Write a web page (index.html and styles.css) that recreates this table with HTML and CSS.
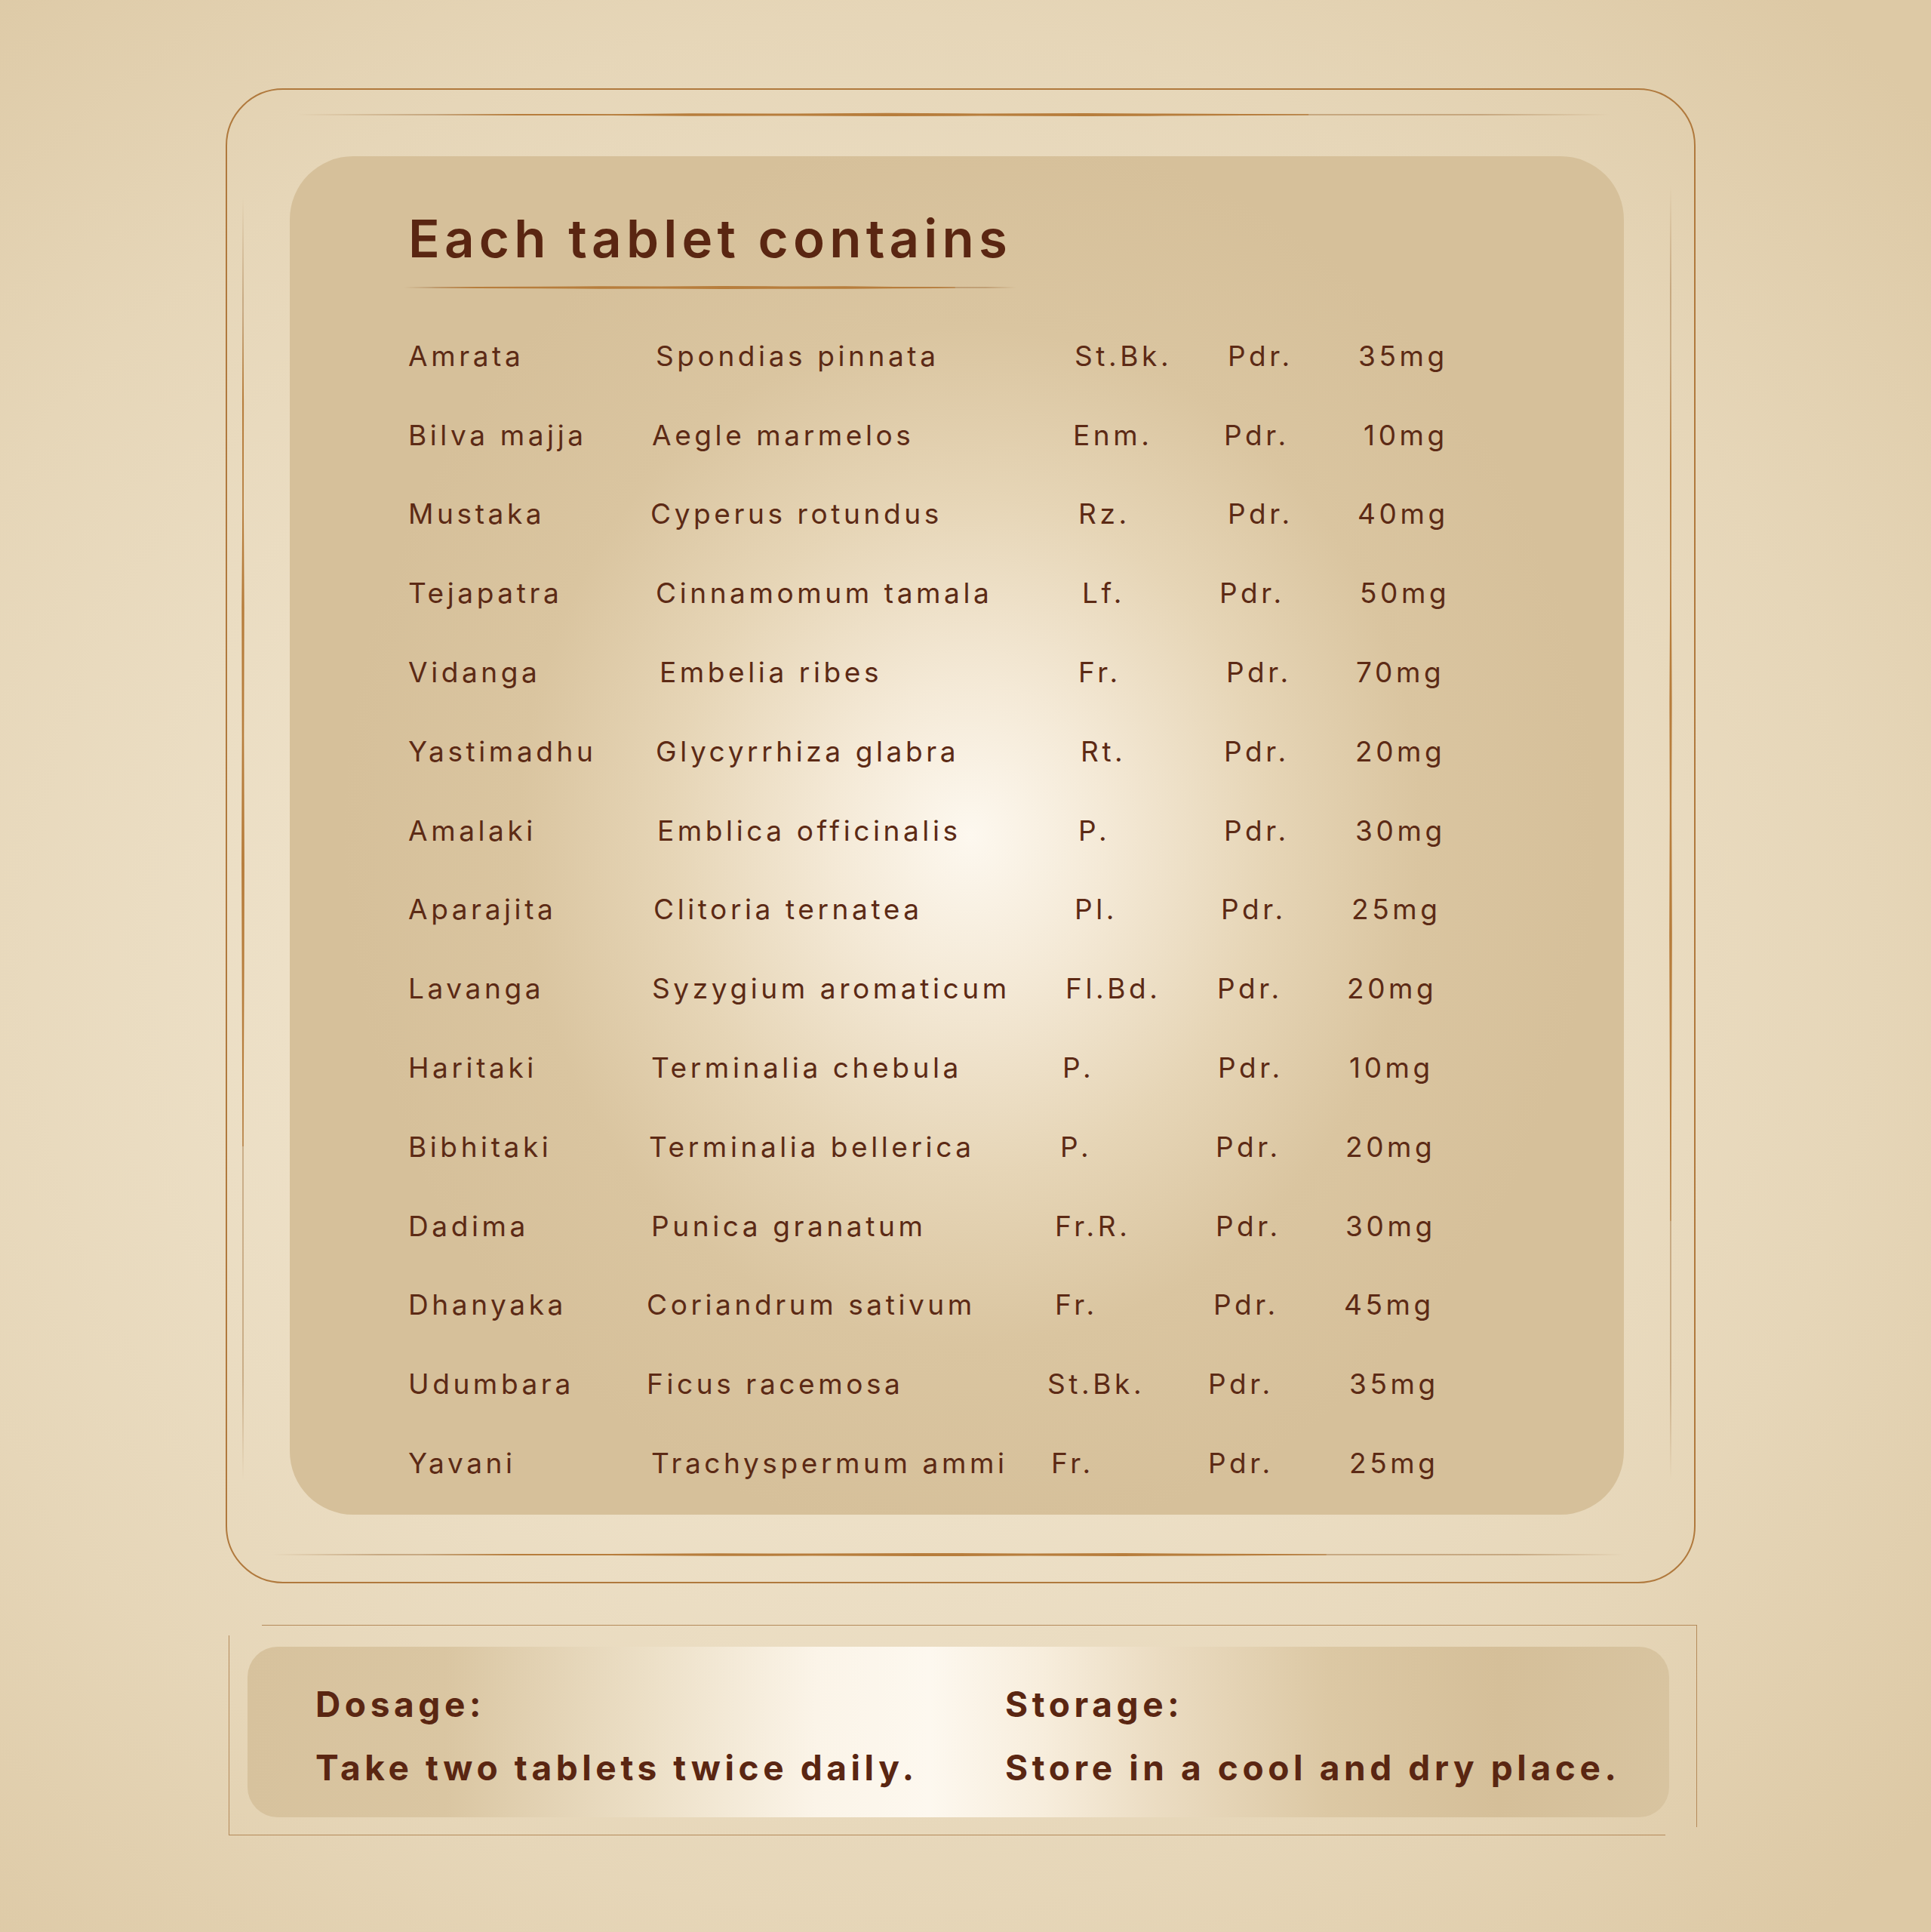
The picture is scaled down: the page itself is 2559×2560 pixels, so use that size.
FILE: index.html
```html
<!DOCTYPE html>
<html lang="en">
<head>
<meta charset="utf-8">
<title>Each tablet contains</title>
<link rel="stylesheet" href="styles.css">
</head>
<body>
<main class="page">
  <section class="frame">
    <svg class="brush brush-top" viewBox="0 0 1000 12" preserveAspectRatio="none" aria-hidden="true">
      <defs>
        <linearGradient id="fadeTop" x1="0" x2="1" y1="0" y2="0">
          <stop offset="0" stop-color="#b0885a" stop-opacity="0"/>
          <stop offset="0.1" stop-color="#b0885a" stop-opacity="0.85"/>
          <stop offset="0.9" stop-color="#b0885a" stop-opacity="0.85"/>
          <stop offset="1" stop-color="#b0885a" stop-opacity="0"/>
        </linearGradient>
      </defs>
      <rect x="0" y="5.3" width="1000" height="1.4" fill="url(#fadeTop)"/>
      <path d="M105 6 L170 5 L240 5.2 L300 4.2 L380 4.6 L450 3.8 L520 4.4 L600 3.9 L660 4.6 L720 5 L770 5.3 L770 6.6 L720 7 L660 7.6 L600 8 L520 7.6 L450 8.1 L380 7.4 L300 7.8 L240 7.1 L170 7 Z" fill="#b77d3c"/>
    </svg>
    <svg class="brush brush-left" viewBox="0 0 12 1000" preserveAspectRatio="none" aria-hidden="true">
      <defs>
        <linearGradient id="fadeLeft" x1="0" x2="0" y1="0" y2="1">
          <stop offset="0" stop-color="#b0885a" stop-opacity="0"/>
          <stop offset="0.08" stop-color="#b0885a" stop-opacity="0.8"/>
          <stop offset="0.92" stop-color="#b0885a" stop-opacity="0.8"/>
          <stop offset="1" stop-color="#b0885a" stop-opacity="0"/>
        </linearGradient>
      </defs>
      <rect x="5.3" y="0" width="1.4" height="1000" fill="url(#fadeLeft)"/>
      <path d="M6 90 L5 160 L5.3 240 L4.3 320 L4.7 420 L4.1 520 L4.6 600 L5 680 L5.4 740 L6.6 740 L7 680 L7.6 600 L7.9 520 L7.3 420 L7.7 320 L6.9 240 L7.1 160 Z" fill="#b77d3c"/>
    </svg>
    <svg class="brush brush-right" viewBox="0 0 12 1000" preserveAspectRatio="none" aria-hidden="true">
      <defs>
        <linearGradient id="fadeRight" x1="0" x2="0" y1="0" y2="1">
          <stop offset="0" stop-color="#b0885a" stop-opacity="0"/>
          <stop offset="0.08" stop-color="#b0885a" stop-opacity="0.8"/>
          <stop offset="0.92" stop-color="#b0885a" stop-opacity="0.8"/>
          <stop offset="1" stop-color="#b0885a" stop-opacity="0"/>
        </linearGradient>
      </defs>
      <rect x="5.3" y="0" width="1.4" height="1000" fill="url(#fadeRight)"/>
      <path d="M6 130 L5.1 220 L5.3 300 L4.4 400 L4.8 480 L4.2 580 L4.7 660 L5.1 740 L5.5 800 L6.5 800 L6.9 740 L7.4 660 L7.8 580 L7.2 480 L7.6 400 L6.8 300 L7 220 Z" fill="#b77d3c"/>
    </svg>
    <svg class="brush brush-bottom" viewBox="0 0 1000 12" preserveAspectRatio="none" aria-hidden="true">
      <defs>
        <linearGradient id="fadeBottom" x1="0" x2="1" y1="0" y2="0">
          <stop offset="0" stop-color="#b0885a" stop-opacity="0"/>
          <stop offset="0.08" stop-color="#b0885a" stop-opacity="0.85"/>
          <stop offset="0.92" stop-color="#b0885a" stop-opacity="0.85"/>
          <stop offset="1" stop-color="#b0885a" stop-opacity="0"/>
        </linearGradient>
      </defs>
      <rect x="0" y="5.3" width="1000" height="1.4" fill="url(#fadeBottom)"/>
      <path d="M110 6 L180 5.1 L250 4.9 L330 4.2 L400 4.6 L480 3.9 L560 4.4 L630 4 L690 4.7 L740 5.1 L780 5.4 L780 6.6 L740 7 L690 7.4 L630 8 L560 7.6 L480 8.1 L400 7.5 L330 7.8 L250 7.1 L180 6.9 Z" fill="#b77d3c"/>
    </svg>

    <div class="panel">
      <h1 class="title">Each tablet contains</h1>
      <svg class="underline" viewBox="0 0 1000 12" preserveAspectRatio="none" aria-hidden="true">
        <defs>
          <linearGradient id="fadeUnder" x1="0" x2="1" y1="0" y2="0">
            <stop offset="0" stop-color="#b0885a" stop-opacity="0"/>
            <stop offset="0.05" stop-color="#b0885a" stop-opacity="0.85"/>
            <stop offset="0.95" stop-color="#b0885a" stop-opacity="0.85"/>
            <stop offset="1" stop-color="#b0885a" stop-opacity="0"/>
          </linearGradient>
        </defs>
        <rect x="0" y="5.3" width="1000" height="1.4" fill="url(#fadeUnder)"/>
        <path d="M45 6 L120 5 L220 4.8 L320 4.2 L420 4.6 L520 3.9 L620 4.4 L720 4.3 L800 4.9 L870 5.3 L900 5.6 L900 6.5 L870 6.9 L800 7.3 L720 7.8 L620 7.7 L520 8.1 L420 7.5 L320 7.8 L220 7.2 L120 7 Z" fill="#b77d3c"/>
      </svg>
      <div class="rows">
        <div class="row"><span>Amrata</span><span>Spondias pinnata</span><span>St.Bk.</span><span>Pdr.</span><span>35mg</span></div>
        <div class="row"><span>Bilva majja</span><span>Aegle marmelos</span><span>Enm.</span><span>Pdr.</span><span>10mg</span></div>
        <div class="row"><span>Mustaka</span><span>Cyperus rotundus</span><span>Rz.</span><span>Pdr.</span><span>40mg</span></div>
        <div class="row"><span>Tejapatra</span><span>Cinnamomum tamala</span><span>Lf.</span><span>Pdr.</span><span>50mg</span></div>
        <div class="row"><span>Vidanga</span><span>Embelia ribes</span><span>Fr.</span><span>Pdr.</span><span>70mg</span></div>
        <div class="row"><span>Yastimadhu</span><span>Glycyrrhiza glabra</span><span>Rt.</span><span>Pdr.</span><span>20mg</span></div>
        <div class="row"><span>Amalaki</span><span>Emblica officinalis</span><span>P.</span><span>Pdr.</span><span>30mg</span></div>
        <div class="row"><span>Aparajita</span><span>Clitoria ternatea</span><span>Pl.</span><span>Pdr.</span><span>25mg</span></div>
        <div class="row"><span>Lavanga</span><span>Syzygium aromaticum</span><span>Fl.Bd.</span><span>Pdr.</span><span>20mg</span></div>
        <div class="row"><span>Haritaki</span><span>Terminalia chebula</span><span>P.</span><span>Pdr.</span><span>10mg</span></div>
        <div class="row"><span>Bibhitaki</span><span>Terminalia bellerica</span><span>P.</span><span>Pdr.</span><span>20mg</span></div>
        <div class="row"><span>Dadima</span><span>Punica granatum</span><span>Fr.R.</span><span>Pdr.</span><span>30mg</span></div>
        <div class="row"><span>Dhanyaka</span><span>Coriandrum sativum</span><span>Fr.</span><span>Pdr.</span><span>45mg</span></div>
        <div class="row"><span>Udumbara</span><span>Ficus racemosa</span><span>St.Bk.</span><span>Pdr.</span><span>35mg</span></div>
        <div class="row"><span>Yavani</span><span>Trachyspermum ammi</span><span>Fr.</span><span>Pdr.</span><span>25mg</span></div>
      </div>
    </div>
  </section>

  <section class="info">
    <div class="info-panel">
      <div class="info-col">
        <h2 class="info-label">Dosage:</h2>
        <p class="info-text">Take two tablets twice daily.</p>
      </div>
      <div class="info-col">
        <h2 class="info-label">Storage:</h2>
        <p class="info-text">Store in a cool and dry place.</p>
      </div>
    </div>
  </section>
</main>
</body>
</html>
```

FILE: styles.css
```css
html, body {
  margin: 0;
  padding: 0;
}

body {
  min-height: 2560px;
  background: radial-gradient(ellipse 72% 68% at 45% 50%, #f4e9d6 0%, #ede0c7 42%, #e6d6b8 72%, #ddc9a5 100%);
  font-family: Inter, Lato, "Liberation Sans", sans-serif;
  color: #5c2a15;
}

.page {
  padding: 117px 0 0 299px;
}

/* ---------- main frame ---------- */
.frame {
  position: relative;
  box-sizing: border-box;
  width: 1948px;
  height: 1981px;
  border: 2px solid #b0793d;
  border-radius: 76px;
  padding: 88px 0 0 83px;
}

.brush {
  position: absolute;
  display: block;
}

.brush-top {
  left: 91px;
  top: 27px;
  width: 1743px;
  height: 12px;
}

.brush-bottom {
  left: 59px;
  top: 1935px;
  width: 1792px;
  height: 12px;
}

.brush-left {
  left: 15px;
  top: 142px;
  width: 12px;
  height: 1700px;
}

.brush-right {
  left: 1907px;
  top: 126px;
  width: 12px;
  height: 1716px;
}

.panel {
  box-sizing: border-box;
  width: 1768px;
  height: 1800px;
  border-radius: 84px;
  padding: 74px 0 0 157px;
  background: radial-gradient(ellipse 47% 52% at 51% 50%, #fdf8ef 0%, #f4e9d6 22%, #e6d5b6 48%, #dac5a0 72%, #d6c09a 100%);
}

.title {
  margin: 0;
  font-size: 69px;
  line-height: 70px;
  font-weight: 600;
  letter-spacing: 6.2px;
  color: #5a2612;
}

.underline {
  display: block;
  margin: 24px 0 0 -6px;
  width: 812px;
  height: 12px;
}

.rows {
  margin-top: 32px;
}

.row {
  display: grid;
  height: 104.8px;
  align-items: center;
  font-size: 37px;
  font-weight: 400;
  letter-spacing: 4.6px;
  color: #5c2a15;
  white-space: nowrap;
}

.row span {
  line-height: normal;
}

.row:nth-child(1)  { grid-template-columns: 328px 555px 203px 173px auto; }
.row:nth-child(2)  { grid-template-columns: 323px 558px 200px 185px auto; }
.row:nth-child(3)  { grid-template-columns: 321px 567px 198px 172px auto; }
.row:nth-child(4)  { grid-template-columns: 328px 565px 182px 186px auto; }
.row:nth-child(5)  { grid-template-columns: 333px 555px 196px 172px auto; }
.row:nth-child(6)  { grid-template-columns: 328px 563px 190px 174px auto; }
.row:nth-child(7)  { grid-template-columns: 330px 558px 193px 174px auto; }
.row:nth-child(8)  { grid-template-columns: 325px 558px 194px 173px auto; }
.row:nth-child(9)  { grid-template-columns: 323px 548px 201px 172px auto; }
.row:nth-child(10) { grid-template-columns: 322px 545px 206px 174px auto; }
.row:nth-child(11) { grid-template-columns: 319px 545px 206px 172px auto; }
.row:nth-child(12) { grid-template-columns: 322px 535px 213px 172px auto; }
.row:nth-child(13) { grid-template-columns: 316px 541px 210px 173px auto; }
.row:nth-child(14) { grid-template-columns: 316px 531px 213px 187px auto; }
.row:nth-child(15) { grid-template-columns: 322px 530px 208px 187px auto; }

/* ---------- dosage / storage ---------- */
.info {
  position: relative;
  box-sizing: border-box;
  width: 1946px;
  height: 279px;
  margin: 55px 0 0 4px;
  padding: 29px 0 0 25px;
}

.info::before {
  content: "";
  position: absolute;
  left: 44px;
  top: 0;
  right: 0;
  height: 267px;
  border-top: 1.5px solid #b48a5a;
  border-right: 1.5px solid #b48a5a;
}

.info::after {
  content: "";
  position: absolute;
  left: 0;
  top: 14px;
  width: 1903px;
  bottom: 0;
  border-left: 1.5px solid #b48a5a;
  border-bottom: 1.5px solid #b48a5a;
}

.info-panel {
  box-sizing: border-box;
  width: 1884px;
  height: 226px;
  border-radius: 40px;
  padding: 34px 0 0 90px;
  display: grid;
  grid-template-columns: 914px auto;
  background: linear-gradient(90deg, #d7c29d 0%, #dac6a2 14%, #ecdfc6 28%, #fbf4e8 40%, #fdf8ef 48%, #f7eddc 56%, #ebdcc2 64%, #dcc8a4 76%, #d5bf99 88%, #d8c4a0 100%);
}

.info-label,
.info-text {
  margin: 0;
  font-size: 46px;
  line-height: 84px;
  font-weight: 700;
  letter-spacing: 5.6px;
  color: #5a2612;
  white-space: nowrap;
}
```
